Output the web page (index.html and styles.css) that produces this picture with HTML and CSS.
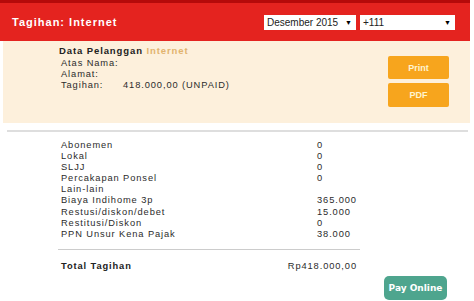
FILE: index.html
```html
<!DOCTYPE html>
<html lang="id">
<head>
  <meta charset="UTF-8" />
  <title>Tagihan: Internet</title>
  <link rel="stylesheet" href="styles.css">
</head>
<body>
  <div class="page">
    <div class="top-strip"></div>

    <div class="header">
      <h1>Tagihan: Internet</h1>
      <div class="filters">
        <div class="select select-month">
          <span>Desember 2015</span>
          <span class="arrow">&#9660;</span>
        </div>
        <div class="select select-number">
          <span>+111</span>
          <span class="arrow">&#9660;</span>
        </div>
      </div>
    </div>

    <!-- customer data -->
    <div class="customer">
      <div class="info">
        <h2>Data Pelanggan <span class="product">Internet</span></h2>
        <div class="info-row"><span class="info-label">Atas Nama:</span><span></span></div>
        <div class="info-row"><span class="info-label">Alamat:</span><span></span></div>
        <div class="info-row"><span class="info-label">Tagihan:</span><span>418.000,00 (UNPAID)</span></div>
      </div>
      <div class="actions">
        <button class="btn-orange">Print</button>
        <button class="btn-orange">PDF</button>
      </div>
    </div>

    <div class="rule"></div>

    <!-- bill details -->
    <div class="bill">
      <div class="bill-row"><span>Abonemen</span><span>0</span></div>
      <div class="bill-row"><span>Lokal</span><span>0</span></div>
      <div class="bill-row"><span>SLJJ</span><span>0</span></div>
      <div class="bill-row"><span>Percakapan Ponsel</span><span>0</span></div>
      <div class="bill-row"><span>Lain-lain</span><span></span></div>
      <div class="bill-row"><span>Biaya Indihome 3p</span><span>365.000</span></div>
      <div class="bill-row"><span>Restusi/diskon/debet</span><span>15.000</span></div>
      <div class="bill-row"><span>Restitusi/Diskon</span><span>0</span></div>
      <div class="bill-row"><span>PPN Unsur Kena Pajak</span><span>38.000</span></div>

      <div class="total">
        <span>Total Tagihan</span>
        <span class="total-value">Rp418.000,00</span>
      </div>
    </div>

    <div class="pay">
      <button class="btn-pay">Pay Online</button>
    </div>
  </div>
</body>
</html>
```

FILE: styles.css
```css
body {
  margin: 0;
  font-family: 'Liberation Sans', Arial, sans-serif;
  background-color: #ffffff;
  color: #2b2b2b;
}

.page {
  width: 470px;
}

.top-strip {
  height: 3px;
  background-color: #b50a0a;
}

.header {
  height: 38px;
  background-color: #e4231f;
  display: flex;
  align-items: center;
  justify-content: space-between;
  padding: 0 15px 0 12px;
}

h1 {
  margin: 0;
  font-size: 11px;
  font-weight: bold;
  letter-spacing: 1px;
  color: #ffffff;
}

.filters {
  display: flex;
  gap: 4px;
  margin-top: 1px;
}

.select {
  height: 15px;
  background-color: #ffffff;
  display: flex;
  align-items: center;
  justify-content: space-between;
  padding: 0 4px 0 3px;
  font-size: 10px;
  color: #222222;
  box-sizing: border-box;
}

.select-month {
  width: 92px;
}

.select-number {
  width: 95px;
}

.arrow {
  font-size: 7px;
  color: #000000;
}

.customer {
  margin-left: 3px;
  height: 82px;
  background-color: #fdf0dc;
  display: flex;
  justify-content: space-between;
}

.info {
  padding: 4px 0 0 56px;
  font-size: 9.3px;
  letter-spacing: 0.9px;
}

h2 {
  margin: 0 0 1px 0;
  font-size: 9.5px;
  font-weight: bold;
  color: #222222;
  line-height: 12px;
}

.product {
  color: #e2b36e;
}

.info-row {
  display: flex;
  line-height: 11px;
  padding-left: 2px;
}

.info-label {
  width: 62px;
}

.actions {
  display: flex;
  flex-direction: column;
  gap: 4px;
  padding: 15px 21px 0 0;
}

.btn-orange {
  width: 61px;
  height: 23px;
  border: none;
  border-radius: 2px;
  background-color: #f7a51d;
  color: #fff4cf;
  font-family: 'Liberation Sans', Arial, sans-serif;
  font-size: 9px;
  font-weight: bold;
  cursor: pointer;
}

.btn-orange + .btn-orange {
  height: 24px;
}

.rule {
  height: 2px;
  background-color: #dedede;
  margin: 7px 2px 0 7px;
}

.bill {
  width: 302px;
  margin: 8px 0 0 58px;
  font-size: 9.3px;
  letter-spacing: 0.9px;
}

.bill-row {
  display: grid;
  grid-template-columns: 256px auto;
  padding-left: 3px;
  line-height: 11.1px;
}

.total {
  margin-top: 9px;
  border-top: 1px solid #cccccc;
  padding: 10px 3px 0 3px;
  display: flex;
  justify-content: space-between;
  line-height: 12px;
}

.total span:first-child {
  font-weight: bold;
  color: #222222;
}

.pay {
  display: flex;
  justify-content: flex-end;
  padding: 4px 23px 0 0;
}

.btn-pay {
  width: 63px;
  height: 24px;
  border: none;
  border-radius: 5px;
  background-color: #4ea58e;
  color: #ffffff;
  font-family: 'DejaVu Sans', Verdana, sans-serif;
  font-size: 9px;
  font-weight: bold;
  padding: 0;
  cursor: pointer;
}
```
